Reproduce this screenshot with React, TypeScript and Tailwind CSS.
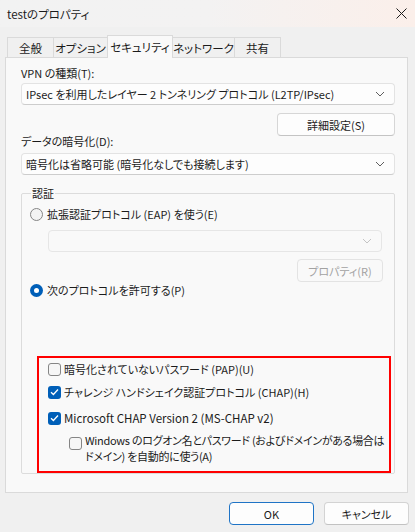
import React from "react";

const font = { fontFamily: "'Noto Sans CJK JP', 'Noto Sans', sans-serif" };

function Chevron({ disabled }: { disabled?: boolean }) {
  return (
    <svg width="10" height="6" viewBox="0 0 10 6" className="shrink-0">
      <path d="M1 1 L5 5 L9 1" fill="none" stroke={disabled ? "#c4c4c4" : "#5f5f5f"} strokeWidth="1" />
    </svg>
  );
}

function Select({ text }: { text: string }) {
  return (
    <div className="h-[22px] flex items-center justify-between pl-[4px] pr-[9px] bg-[#fdfdfd] border border-[#e3e3e3] border-b-[#cdcdcd] rounded-[4px]">
      <span className="whitespace-nowrap">{text}</span>
      <Chevron />
    </div>
  );
}

function Radio({ checked }: { checked?: boolean }) {
  if (checked) {
    return (
      <span className="w-[13px] h-[13px] rounded-full bg-[#005fb8] flex items-center justify-center shrink-0">
        <span className="w-[5px] h-[5px] rounded-full bg-white" />
      </span>
    );
  }
  return <span className="block w-[13px] h-[13px] rounded-full border border-[#858585] bg-[#f3f3f3] shrink-0" />;
}

function Check({ checked }: { checked?: boolean }) {
  if (checked) {
    return (
      <span className="w-[13px] h-[13px] rounded-[3px] bg-[#005fb8] flex items-center justify-center shrink-0">
        <svg width="9" height="8" viewBox="0 0 9 8">
          <path d="M1 4.2 L3.4 6.5 L8 1.5" fill="none" stroke="#fff" strokeWidth="1.3" />
        </svg>
      </span>
    );
  }
  return <span className="block w-[13px] h-[13px] rounded-[3px] border border-[#858585] bg-[#f6f6f6] shrink-0" />;
}

const tabs = [
  { label: "全般", w: "w-[47px]" },
  { label: "オプション", w: "w-[55px]" },
  { label: "セキュリティ", w: "w-[66px]", active: true },
  { label: "ネットワーク", w: "w-[63px]" },
  { label: "共有", w: "w-[47px]" },
];

export default function App() {
  return (
    <div
      className="w-[415px] h-[532px] bg-[#f0f0f0] text-[11px] leading-[16px] text-[#1b1b1b] flex flex-col overflow-hidden [font-feature-settings:'palt']"
      style={font}
    >
      {/* title bar */}
      <div className="h-[27px] flex items-center justify-between pl-[7px] pr-[8px] text-[11.5px] bg-gradient-to-r from-[#f2f2f2] via-[#f3f2f2] to-[#fbefea]">
        <span>testのプロパティ</span>
        <svg width="11" height="11" viewBox="0 0 11 11">
          <path d="M0.5 0.5 L10.5 10.5 M10.5 0.5 L0.5 10.5" stroke="#1b1b1b" strokeWidth="1" />
        </svg>
      </div>

      {/* tabs */}
      <div className="h-[22px] mt-[8px] ml-[7px] flex items-start text-[11.5px]">
        {tabs.map((t) =>
          t.active ? (
            <div key={t.label} className={`${t.w} h-[23px] relative z-10 -ml-px flex items-center justify-center whitespace-nowrap bg-[#f9f9f9] border border-b-0 border-[#dadada]`}>
              {t.label}
            </div>
          ) : (
            <div key={t.label} className={`${t.w} h-[20px] mt-[2px] -ml-px first:ml-0 flex items-center justify-center whitespace-nowrap bg-[#f0f0f0] border border-b-0 border-[#dadada]`}>
              {t.label}
            </div>
          )
        )}
      </div>

      {/* panel */}
      <div className="ml-[5px] w-[403px] h-[436px] bg-[#f9f9f9] border border-[#dadada] pl-[15px] pr-[12px] pt-[7px] flex flex-col">
        <div>VPN の種類(T):</div>
        <div className="mt-[2px]">
          <Select text="IPsec を利用したレイヤー 2 トンネリング プロトコル (L2TP/IPsec)" />
        </div>
        <div className="mt-[8px] self-end w-[118px] h-[23px] flex items-center justify-center bg-[#fdfdfd] border border-[#d6d6d6] border-b-[#c4c4c4] rounded-[4px]">
          詳細設定(S)
        </div>
        <div className="-mt-[3px]">データの暗号化(D):</div>
        <div className="mt-[4px]">
          <Select text="暗号化は省略可能 (暗号化なしでも接続します)" />
        </div>

        {/* group box */}
        <div className="relative mt-[18px] h-[281px] border border-[#dcdcdc] rounded-[2px] flex flex-col">
          <span className="absolute -top-[9px] left-[9px] px-[1px] bg-[#f9f9f9]">認証</span>
          <div className="mt-[12px] ml-[8px] flex items-center gap-[4px]">
            <Radio />
            <span>拡張認証プロトコル (EAP) を使う(E)</span>
          </div>
          <div className="mt-[8px] ml-[26px] mr-[12px] h-[22px] flex items-center justify-end pr-[9px] bg-[#f9f9f9] border border-[#e6e6e6] rounded-[4px]">
            <Chevron disabled />
          </div>
          <div className="mt-[7px] self-end mr-[11px] w-[86px] h-[23px] flex items-center justify-center text-[#a2a2a2] bg-[#f9f9f9] border border-[#e3e3e3] rounded-[4px]">
            プロパティ(R)
          </div>
          <div className="ml-[8px] flex items-center gap-[4px]">
            <Radio checked />
            <span>次のプロトコルを許可する(P)</span>
          </div>

          {/* highlighted options */}
          <div className="mt-[58px] ml-[15px] mr-[3px] h-[117px] border-2 border-[#ff0000] pl-[9px] pt-[3px] flex flex-col">
            <div className="flex items-center gap-[3px]">
              <Check />
              <span>暗号化されていないパスワード (PAP)(U)</span>
            </div>
            <div className="mt-[7px] flex items-center gap-[3px]">
              <Check checked />
              <span>チャレンジ ハンドシェイク認証プロトコル (CHAP)(H)</span>
            </div>
            <div className="mt-[10px] flex items-center gap-[3px]">
              <Check checked />
              <span className="text-[11.5px]">Microsoft CHAP Version 2 (MS-CHAP v2)</span>
            </div>
            <div className="mt-[6px] ml-[21px] flex items-start gap-[3px]">
              <span className="mt-[5px] shrink-0 flex">
                <Check />
              </span>
              <span className="whitespace-nowrap tracking-[-0.3px]">
                Windows のログオン名とパスワード (およびドメインがある場合は
                <br />
                ドメイン) を自動的に使う(A)
              </span>
            </div>
          </div>
        </div>
      </div>

      {/* footer */}
      <div className="mt-[9px] pr-[6px] flex justify-end gap-[10px]">
        <div className="w-[85px] h-[23px] flex items-center justify-center bg-[#fdfdfd] border-[1.5px] border-[#1f74c6] rounded-[4px]">
          OK
        </div>
        <div className="w-[85px] h-[23px] flex items-center justify-center bg-[#fdfdfd] border border-[#d3d3d3] border-b-[#c2c2c2] rounded-[4px]">
          キャンセル
        </div>
      </div>
    </div>
  );
}
